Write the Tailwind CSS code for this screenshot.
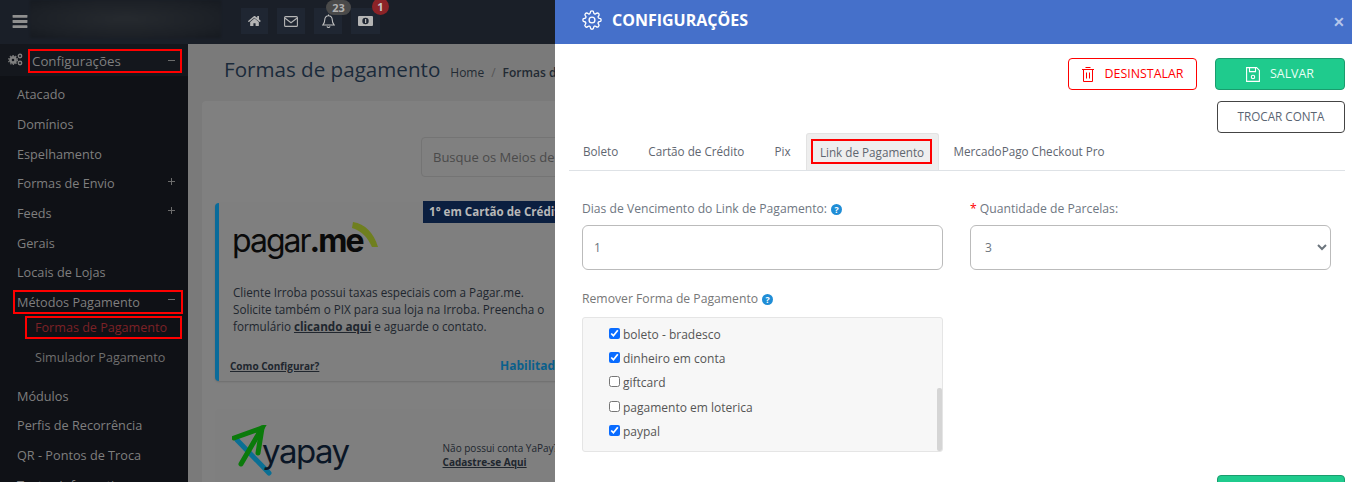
<!DOCTYPE html>
<html lang="pt-BR">
<head>
  <meta charset="UTF-8" />
  <title>Formas de pagamento</title>
  <script src="https://cdn.jsdelivr.net/npm/@tailwindcss/browser@4"></script>
</head>
<body class="w-[1352px] h-[482px] overflow-hidden relative bg-[#7a7a7a] font-['Open_Sans',sans-serif] text-[13px]">

  <!-- Pagina por tras do modal -->
  <div class="w-[555px] h-[482px] overflow-hidden">
    <!-- Topbar -->
    <header class="h-[44px] w-[555px] bg-[#1a1f28] flex items-start relative">
      <div class="w-[30px] h-[44px] flex items-center pl-[12px] shrink-0">
        <svg class="w-[16px] h-[13px] shrink-0 mt-[-2px]" viewBox="0 0 16 14" fill="#8f8f8f"><rect width="16" height="3" rx="0.5"/><rect y="5.5" width="16" height="3" rx="0.5"/><rect y="11" width="16" height="3" rx="0.5"/></svg>
      </div>
      <div class="w-[191px] h-[38px] shrink-0 bg-[radial-gradient(ellipse_at_center,#262a2f_0%,#1c2026_70%,#161a20_100%)] blur-[1px]"></div>
      <div class="flex ml-[20px] mt-[8px] gap-[9px]">
        <div class="w-[27px] h-[26px] bg-[#1f2632] flex items-center justify-center">
          <svg class="w-[13px] h-[12px]" viewBox="0 0 576 512" fill="#b5b5b5"><path d="M280 148 96 300v164c0 9 7 16 16 16l112-.3c9 0 16-7 16-16V368c0-9 7-16 16-16h64c9 0 16 7 16 16v95.600c0 9 7 16 16 16L464 480c9 0 16-7 16-16V300L296 148c-5-4-11-4-16 0zm292 103-84-69V44c0-7-5-12-12-12h-56c-7 0-12 5-12 12v73l-90-74c-18-15-43-15-61 0L4 251c-5 4-6 12-2 17l26 31c4 5 12 6 17 2L280 107l235 194c5 4 13 3 17-2l26-31c4-5 3-13-2-17z"/></svg>
        </div>
        <div class="w-[28px] h-[26px] bg-[#1f2632] flex items-center justify-center">
          <svg class="w-[14px] h-[11px]" viewBox="0 0 14 11" fill="none" stroke="#b5b5b5" stroke-width="1.100"><rect x="0.600" y="0.600" width="12.800" height="9.800" rx="1"/><path d="M0.800 2 7 6.800 13.200 2"/></svg>
        </div>
        <div class="w-[28px] h-[26px] bg-[#1f2632] flex items-center justify-center relative">
          <svg class="w-[13px] h-[14px]" viewBox="0 0 13 14" fill="none" stroke="#c0c0c0" stroke-width="1.100"><path d="M6.500 1.800c-2.300 0-3.700 1.700-3.700 3.800 0 3-1 4.300-2 5.400h11.400c-1-1.100-2-2.400-2-5.400 0-2.100-1.400-3.800-3.700-3.800zM6.500 0.500v1.300M5 12.300c.2.800.8 1.200 1.500 1.200s1.300-.4 1.500-1.200"/></svg>
          <span class="absolute top-[-8px] left-[12px] w-[25px] h-[15px] rounded-full bg-[#4a4a4a] text-[#b0b0b0] text-[11px] font-bold leading-[15px] text-center">23</span>
        </div>
        <div class="w-[29px] h-[26px] bg-[#1f2632] flex items-center justify-center relative">
          <svg class="w-[15px] h-[10px]" viewBox="0 0 15 10"><rect width="15" height="10" rx="1" fill="#b5b5b5"/><circle cx="7.500" cy="5" r="3.200" fill="#1f2632"/><rect x="7" y="3" width="1.200" height="4" fill="#b5b5b5"/></svg>
          <span class="absolute top-[-10px] left-[21px] w-[17px] h-[17px] rounded-full bg-[#8c2327] text-[#c8c8c8] text-[11px] font-bold leading-[17px] text-center">1</span>
        </div>
      </div>
    </header>

    <div class="flex h-[438px]">
      <!-- Sidebar -->
      <aside class="w-[188px] shrink-0 bg-[#0f1116] text-[#7f7f7f] text-[12.7px] overflow-hidden">
        <div class="relative h-[32px] bg-[#14171d] flex items-center pl-[8px] pr-[12px]">
          <svg class="w-[15px] h-[13px] mr-[9px] mt-[-2px]" viewBox="0 0 15 13" fill="none" stroke="#7f7f7f"><circle cx="5" cy="7" r="2.600" stroke-width="2.600"/><circle cx="5" cy="7" r="4.400" stroke-width="1.200" stroke-dasharray="1.400 1.400"/><circle cx="12" cy="3" r="1.700" stroke-width="1.400"/><circle cx="12" cy="10" r="1.700" stroke-width="1.400"/></svg>
          <span class="text-[13.3px] mt-[4px]">Configurações</span>
          <svg class="w-[7px] h-[7px] ml-auto mr-[1px]" viewBox="0 0 7 7" stroke="#6c6c6c"><path d="M0 3.500h7"/></svg>
          <div class="absolute left-[28px] top-[5px] w-[154px] h-[24px] border-2 border-[#ff0000]"></div>
        </div>
        <ul class="pl-[17px] pr-[13px] pt-[3px]">
          <li class="h-[30px] leading-[30px]">Atacado</li>
          <li class="h-[30px] leading-[30px]">Domínios</li>
          <li class="h-[30px] leading-[30px]">Espelhamento</li>
          <li class="h-[29px] leading-[29px] flex justify-between items-center">Formas de Envio<svg class="w-[7px] h-[7px] mt-[-5px]" viewBox="0 0 7 7" stroke="#6c6c6c"><path d="M0 3.500h7M3.500 0v7"/></svg></li>
          <li class="h-[30px] leading-[30px] flex justify-between items-center">Feeds<svg class="w-[7px] h-[7px] mt-[-5px]" viewBox="0 0 7 7" stroke="#6c6c6c"><path d="M0 3.500h7M3.500 0v7"/></svg></li>
          <li class="h-[30px] leading-[30px]">Gerais</li>
          <li class="h-[29px] leading-[29px]">Locais de Lojas</li>
          <li class="relative h-[30px] leading-[30px] flex justify-between items-center">Métodos Pagamento<svg class="w-[7px] h-[7px] mt-[-5px]" viewBox="0 0 7 7" stroke="#6c6c6c"><path d="M0 3.500h7"/></svg>
            <div class="absolute left-[-4px] top-[3px] w-[170px] h-[24px] border-2 border-[#ff0000]"></div>
          </li>
          <li class="relative h-[24px] leading-[21px] pl-[18px] text-[#7c2126] text-[12.6px]">Formas de Pagamento
            <div class="absolute left-[8px] top-[-1px] w-[157px] h-[23px] border-2 border-[#ff0000]"></div>
          </li>
          <li class="h-[32px] leading-[34px] pl-[18px] text-[#6f6f6f] text-[12.6px]">Simulador Pagamento</li>
          <li class="h-[30px] leading-[30px] mt-[8px]">Módulos</li>
          <li class="h-[29px] leading-[29px]">Perfis de Recorrência</li>
          <li class="h-[30px] leading-[30px]">QR - Pontos de Troca</li>
          <li class="h-[30px] leading-[30px]">Textos Informativos</li>
        </ul>
      </aside>

      <!-- Conteudo -->
      <main class="flex-1 min-w-0 bg-[#7a7a7a] pl-[14px] overflow-hidden">
        <div class="flex items-baseline pl-[22px] pt-[10px] h-[57px] whitespace-nowrap">
          <h1 class="text-[20.6px] text-[#1a2a3a]">Formas de pagamento</h1>
          <span class="ml-[10px] text-[12px] text-[#222a33]">Home</span>
          <span class="mx-[7px] text-[12px] text-[#555]">/</span>
          <span class="text-[12px] font-semibold text-[#222a33]">Formas de pagamento</span>
        </div>
        <section class="w-[500px] h-[400px] bg-[#808080] rounded-[4px] pl-[13px] pt-[36px]">
          <div class="ml-[206px] w-[300px] h-[40px] border border-[#747474] rounded-l-[4px] pl-[11px] leading-[38px] text-[#4a4a4a]">Busque os Meios de Pagamento</div>

          <div class="relative mt-[26px] w-[400px] h-[178px] border-l-4 border-[#0a6b9a] bg-[#7f7f7f] rounded-[4px] shadow-[0_1px_2px_rgba(0,0,0,0.15)]">
            <div class="absolute left-[204px] top-[-2px] w-[200px] h-[22px] bg-[#0b1f40] text-[#b8b8b8] text-[11.6px] font-bold leading-[22px] pl-[6px] whitespace-nowrap">1° em Cartão de Crédito</div>
            <div class="pl-[13px] pt-[20px] h-[74px] flex items-start">
              <span class="font-['Inter',sans-serif] text-[32px] leading-[36px] tracking-[-2px] text-[#0a0a0a]">pagar<span class="font-bold">.me</span></span>
              <svg class="w-[26px] h-[26px] ml-[-10px] mt-[-1px]" viewBox="0 0 26 26"><path d="M1 0c12 2 21 11 25 25h-6C16 16 10 9 0 6z" fill="#6f7f1f"/></svg>
            </div>
            <p class="pl-[14px] pt-[7px] w-[330px] text-[11.7px] leading-[17px] text-[#20262e]">Cliente Irroba possui taxas especiais com a Pagar.me. Solicite também o PIX para sua loja na Irroba. Preencha o formulário <a class="font-bold underline">clicando aqui</a> e aguarde o contato.</p>
            <div class="flex mt-[22px] pl-[11px] items-center whitespace-nowrap">
              <a class="text-[10px] font-bold underline text-[#20262e] w-[270px]">Como Configurar?</a>
              <span class="text-[12px] font-bold text-[#0a5f8c]">Habilitado</span>
            </div>
          </div>

          <div class="mt-[28px] w-[400px] h-[100px] bg-[#7f7f7f] rounded-[4px] flex pl-[17px] pt-[16px]">
            <svg class="w-[40px] h-[52px] shrink-0" viewBox="0 0 40 52" fill="none" stroke-width="5" stroke-linecap="round"><path d="M5 15 37 48" stroke="#0a6f94"/><path d="M2 13 30 3 9 39" stroke="#0b7a0b"/><path d="M30 3 26 28" stroke="#0b7a0b"/></svg>
            <span class="font-['Inter',sans-serif] text-[33px] tracking-[-1.500px] leading-[36px] text-[#0a1626] mt-[8px] ml-[-10px]">yapay</span>
            <div class="ml-[94px] mt-[16px] text-[10px] leading-[14px] text-[#20262e] whitespace-nowrap">
              <div>Não possui conta YaPay?</div>
              <a class="font-bold underline">Cadastre-se Aqui</a>
            </div>
          </div>
        </section>
      </main>
    </div>
  </div>

  <!-- Modal de configuracoes -->
  <div class="absolute top-0 right-0 w-[797px] h-[482px] bg-white overflow-hidden text-[#6c757d]">
    <div class="h-[44px] bg-[#4570ca] flex items-center pl-[27px] pr-[7px] text-white">
      <svg class="w-[20px] h-[20px] mr-[10px] mt-[-5px]" viewBox="0 0 24 24" fill="none" stroke="#fff" stroke-width="1.600" stroke-linejoin="round"><circle cx="12" cy="12" r="3.500"/><path d="M19.400 15a1.700 1.700 0 0 0 .3 1.800l.1.100a2 2 0 1 1-2.900 2.900l-.1-.1a1.700 1.700 0 0 0-2.800 1.200v.2a2 2 0 1 1-4 0V21a1.700 1.700 0 0 0-2.900-1.200l-.1.100a2 2 0 1 1-2.900-2.900l.1-.1a1.700 1.700 0 0 0-1.200-2.800H3a2 2 0 1 1 0-4h.1a1.700 1.700 0 0 0 1.200-2.900l-.1-.1a2 2 0 1 1 2.900-2.900l.1.100a1.700 1.700 0 0 0 1.800.3H9a1.700 1.700 0 0 0 1-1.500V3a2 2 0 1 1 4 0v.1a1.700 1.700 0 0 0 2.900 1.200l.1-.1a2 2 0 1 1 2.900 2.900l-.1.100a1.700 1.700 0 0 0-.3 1.800V9a1.700 1.700 0 0 0 1.500 1H21a2 2 0 1 1 0 4h-.1a1.700 1.700 0 0 0-1.500 1z"/></svg>
      <h2 class="text-[16px] font-bold mt-[-5px]">CONFIGURAÇÕES</h2>
      <span class="ml-auto mt-[-1px] text-[#b5c6ea] text-[14px] font-bold leading-none">✕</span>
    </div>

    <div class="flex flex-col items-end pr-[7px] pt-[14px] gap-[11px]">
      <div class="flex gap-[18px]">
        <button class="w-[129px] h-[32px] border border-[#ff0000] rounded-[4px] text-[#ff0000] text-[12.4px] flex items-center justify-center gap-[11px]">
          <svg class="w-[12px] h-[15px]" viewBox="0 0 12 15" fill="none" stroke="#ff0000" stroke-width="1"><path d="M0 2.500h12M3.500 .5h5M1.500 2.500v12h9v-12M4.500 5.500v6M7.500 5.500v6"/></svg>
          DESINSTALAR
        </button>
        <button class="w-[130px] h-[32px] bg-[#1fcb8d] border border-[#1a9d6e] rounded-[4px] text-[#e8fff6] text-[12.4px] flex items-center justify-center gap-[10px]">
          <svg class="w-[14px] h-[15px]" viewBox="0 0 14 15" fill="none" stroke="#fff" stroke-width="1.100"><path d="M.6.6h10l2.800 2.800v11H.6zM3.500.6v4h6v-4"/><circle cx="7" cy="10" r="1.700"/></svg>
          SALVAR
        </button>
      </div>
      <button class="w-[128px] h-[32px] border border-[#444] rounded-[4px] text-[11.7px] text-[#5a6472]">TROCAR CONTA</button>
    </div>

    <nav class="ml-[14px] mr-[7px] h-[38px] border-b border-[#dee2e6] flex text-[11.7px] text-[#5f6670] whitespace-nowrap">
      <a class="pl-[14px] pr-[15px] leading-[37px]">Boleto</a>
      <a class="px-[15px] leading-[37px]">Cartão de Crédito</a>
      <a class="px-[15px] leading-[37px]">Pix</a>
      <a class="relative w-[133px] h-[37px] bg-[#eeeeee] border border-b-0 border-[#e3e3e3] rounded-t-[3px] text-center leading-[36px]">Link de Pagamento
        <div class="absolute left-[4px] top-[5px] w-[121px] h-[25px] border-2 border-[#ff0000]"></div>
      </a>
      <a class="pl-[15px] leading-[37px]">MercadoPago Checkout Pro</a>
    </nav>

    <div class="grid grid-cols-[361px_361px] gap-x-[27px] pl-[27px] pt-[28px]">
      <div>
        <label class="flex items-center h-[20px] text-[12.15px] text-[#6f7782]">Dias de Vencimento do Link de Pagamento:
          <svg class="w-[11px] h-[11px] ml-[4px]" viewBox="0 0 10 10"><circle cx="5" cy="5" r="5" fill="#1f8dd6"/><text x="5" y="8" text-anchor="middle" font-size="8" font-weight="700" fill="#fff" font-family="Open Sans">?</text></svg>
        </label>
        <input value="1" class="mt-[6px] w-[361px] h-[45px] border border-[#bbbbbb] rounded-[6px] px-[11px] text-[12px] text-[#6c757d] bg-white" />
      </div>
      <div>
        <label class="flex items-center h-[20px] text-[12.2px] text-[#6f7782]"><span class="text-[#ff0000] mr-[3px]">*</span>Quantidade de Parcelas:</label>
        <select class="mt-[6px] w-[361px] h-[45px] border border-[#bbbbbb] rounded-[6px] pl-[10px] text-[12px] text-[#6c757d] bg-white"><option>3</option></select>
      </div>
    </div>

    <div class="pl-[27px] pt-[19px]">
      <label class="flex items-center h-[20px] text-[12.2px] text-[#777]">Remover Forma de Pagamento
        <svg class="w-[11px] h-[11px] ml-[4px]" viewBox="0 0 10 10"><circle cx="5" cy="5" r="5" fill="#1f8dd6"/><text x="5" y="8" text-anchor="middle" font-size="8" font-weight="700" fill="#fff" font-family="Open Sans">?</text></svg>
      </label>
      <div class="relative mt-[8px] w-[361px] h-[135px] bg-[#f7f7f7] border border-[#e5e5e5] rounded-[3px] pl-[26px] pt-[5px] text-[12px] text-[#555]">
        <label class="flex items-center h-[24px] gap-[3px]"><input type="checkbox" checked class="w-[11px] h-[11px] mt-[-3px] accent-[#0a6cff]" />boleto - bradesco</label>
        <label class="flex items-center h-[24px] gap-[3px]"><input type="checkbox" checked class="w-[11px] h-[11px] mt-[-3px] accent-[#0a6cff]" />dinheiro em conta</label>
        <label class="flex items-center h-[24px] gap-[3px]"><input type="checkbox" class="w-[11px] h-[11px] mt-[-3px]" />giftcard</label>
        <label class="flex items-center h-[25px] gap-[3px]"><input type="checkbox" class="w-[11px] h-[11px] mt-[-3px]" />pagamento em loterica</label>
        <label class="flex items-center h-[24px] gap-[3px]"><input type="checkbox" checked class="w-[11px] h-[11px] mt-[-3px] accent-[#0a6cff]" />paypal</label>
        <div class="absolute right-0 top-[70px] w-[5px] h-[63px] bg-[#d5d5d5] rounded-[2px]"></div>
      </div>
    </div>

    <div class="flex justify-end pr-[7px] pt-[23px]">
      <div class="w-[128px] h-[32px] bg-[#1fcb8d] border border-[#1a9d6e] rounded-[4px]"></div>
    </div>
  </div>
</body>
</html>
